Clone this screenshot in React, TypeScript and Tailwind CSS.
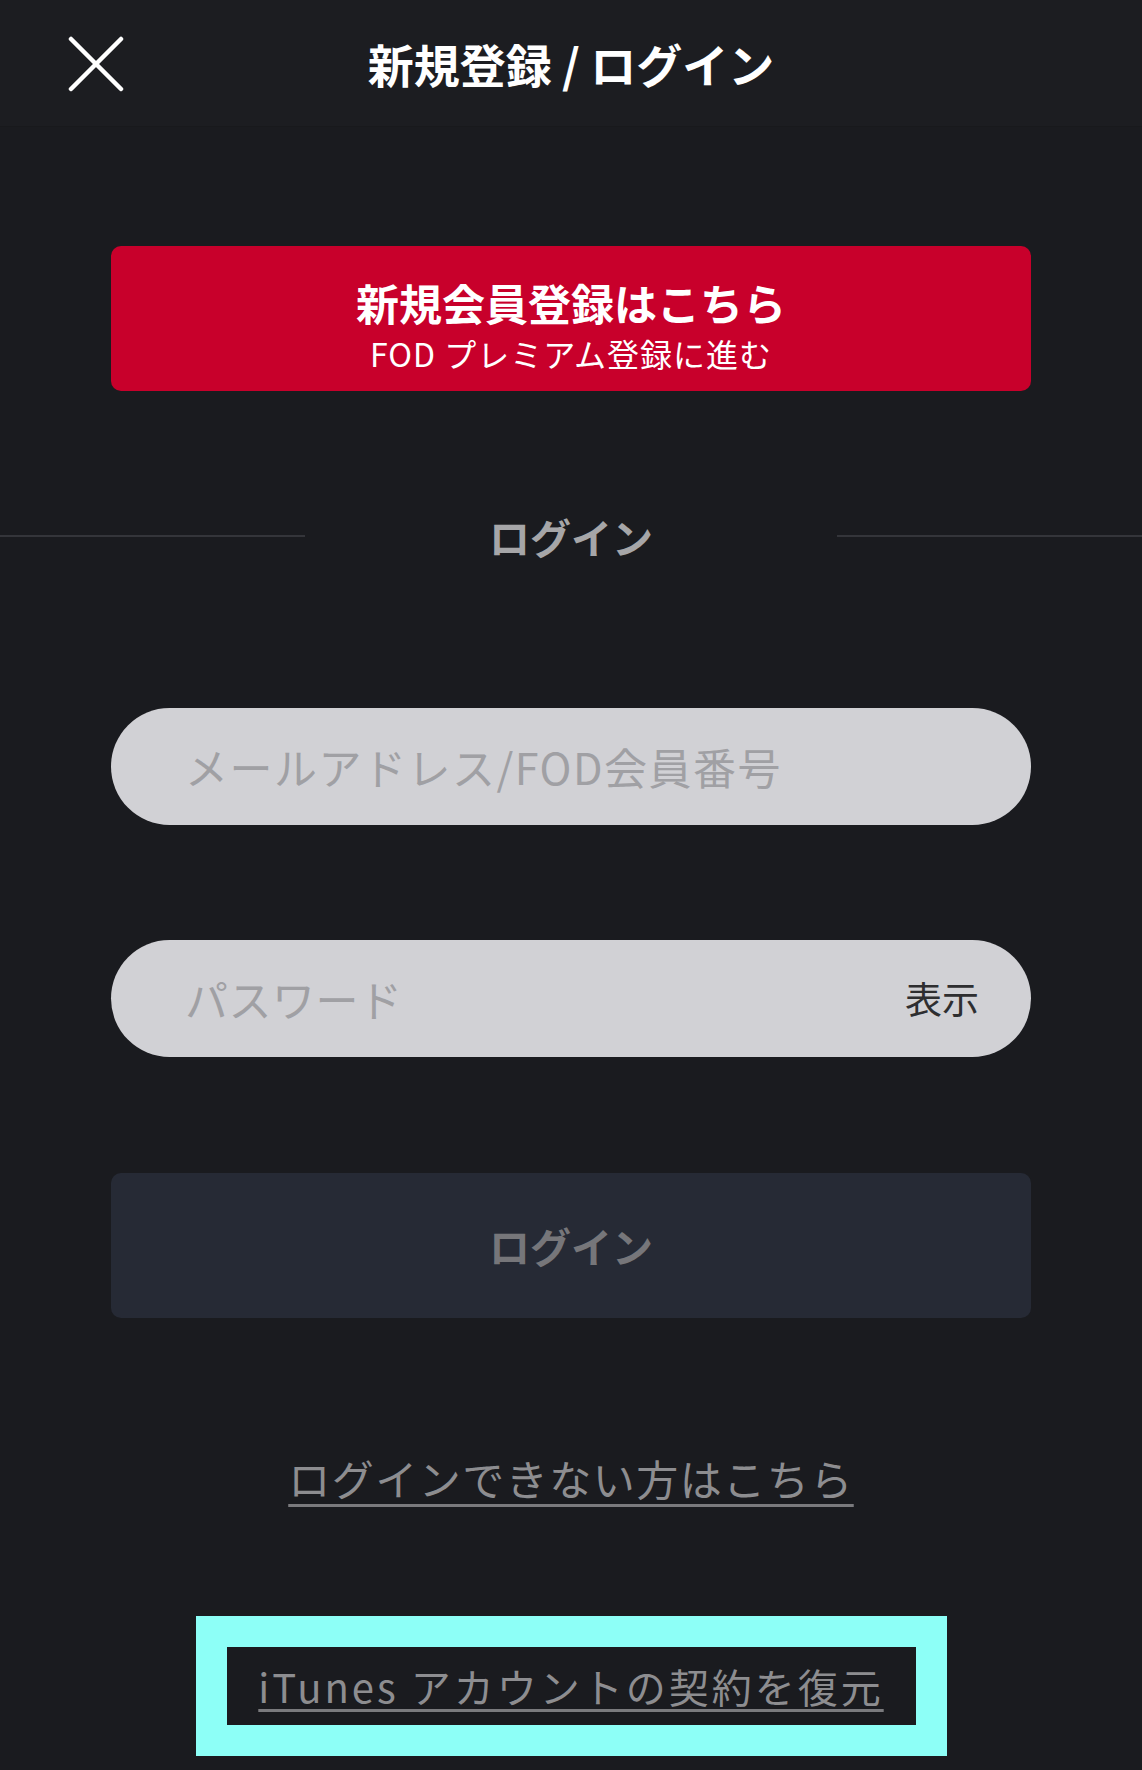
import React from "react";

const jp = { fontFamily: '"Noto Sans CJK JP", "Noto Sans", sans-serif' };

export default function App() {
  return (
    <div className="min-h-[1770px] w-full bg-[#1a1b1f]" style={jp}>
      {/* Header */}
      <header className="grid h-[127px] grid-cols-[1fr_auto_1fr] items-center border-b border-[#18191c] bg-[#1c1d21]">
        <div className="flex items-center pl-[68px] pt-[1px]">
          <svg width="56" height="56" viewBox="0 0 56 56" fill="none">
            <line x1="3" y1="3" x2="53" y2="53" stroke="#ffffff" strokeWidth="4.5" strokeLinecap="round" />
            <line x1="53" y1="3" x2="3" y2="53" stroke="#ffffff" strokeWidth="4.5" strokeLinecap="round" />
          </svg>
        </div>
        <h1 className="text-[46px] font-bold leading-none tracking-[0px] text-white">
          新規登録 / ログイン
        </h1>
        <div />
      </header>

      <main className="flex flex-col px-[111px]">
        {/* Register button */}
        <button className="mt-[119px] flex h-[145px] flex-col items-center justify-center rounded-[10px] bg-[#c8002b] pt-[12px] text-white">
          <span className="text-[43px] font-bold leading-[50px]">新規会員登録はこちら</span>
          <span className="mt-[6px] text-[32px] leading-[40px] tracking-[1px]">FOD プレミアム登録に進む</span>
        </button>
      </main>

      {/* Divider */}
      <div className="mt-[120px] flex h-[50px] items-center">
        <div className="h-[2px] w-[305px] bg-[#34353a]" />
        <div className="flex-1 text-center text-[41px] font-bold leading-none text-[#a6a6a8]">ログイン</div>
        <div className="h-[2px] w-[305px] bg-[#34353a]" />
      </div>

      <main className="flex flex-col px-[111px]">
        {/* Email input */}
        <div className="mt-[147px] flex h-[117px] items-center rounded-full bg-[#d1d1d5] pl-[74px] pr-[50px]">
          <span className="text-[43px] leading-none tracking-[1.5px] text-[#a0a0a4]">メールアドレス/FOD会員番号</span>
        </div>

        {/* Password input */}
        <div className="mt-[115px] flex h-[117px] items-center justify-between rounded-full bg-[#d1d1d5] pl-[74px] pr-[52px]">
          <span className="text-[43px] leading-none tracking-[0.5px] text-[#a0a0a4]">パスワード</span>
          <span className="text-[37px] leading-none text-[#2e2e30]">表示</span>
        </div>

        {/* Login button */}
        <button className="mt-[116px] flex h-[145px] items-center justify-center rounded-[10px] bg-[#262a35]">
          <span className="text-[41px] font-bold leading-none text-[#76767a]">ログイン</span>
        </button>

        {/* Forgot link */}
        <div className="mt-[135px] flex h-[50px] items-center justify-center">
          <a className="text-[42px] leading-none tracking-[1.5px] text-[#8d8d90] underline decoration-[#7a7a7d] decoration-[3px] underline-offset-[8px]">
            ログインできない方はこちら
          </a>
        </div>

        {/* Restore (highlighted) */}
        <div className="mt-[113px] flex justify-center">
          <div className="flex h-[140px] w-[751px] items-center justify-center border-[31px] border-[#8dfff7] bg-[#1a1b1f]">
            <a className="text-[40px] leading-none tracking-[3px] text-[#8d8d90] underline decoration-[#7a7a7d] decoration-[3px] underline-offset-[6px]">
              iTunes アカウントの契約を復元
            </a>
          </div>
        </div>
      </main>
    </div>
  );
}
